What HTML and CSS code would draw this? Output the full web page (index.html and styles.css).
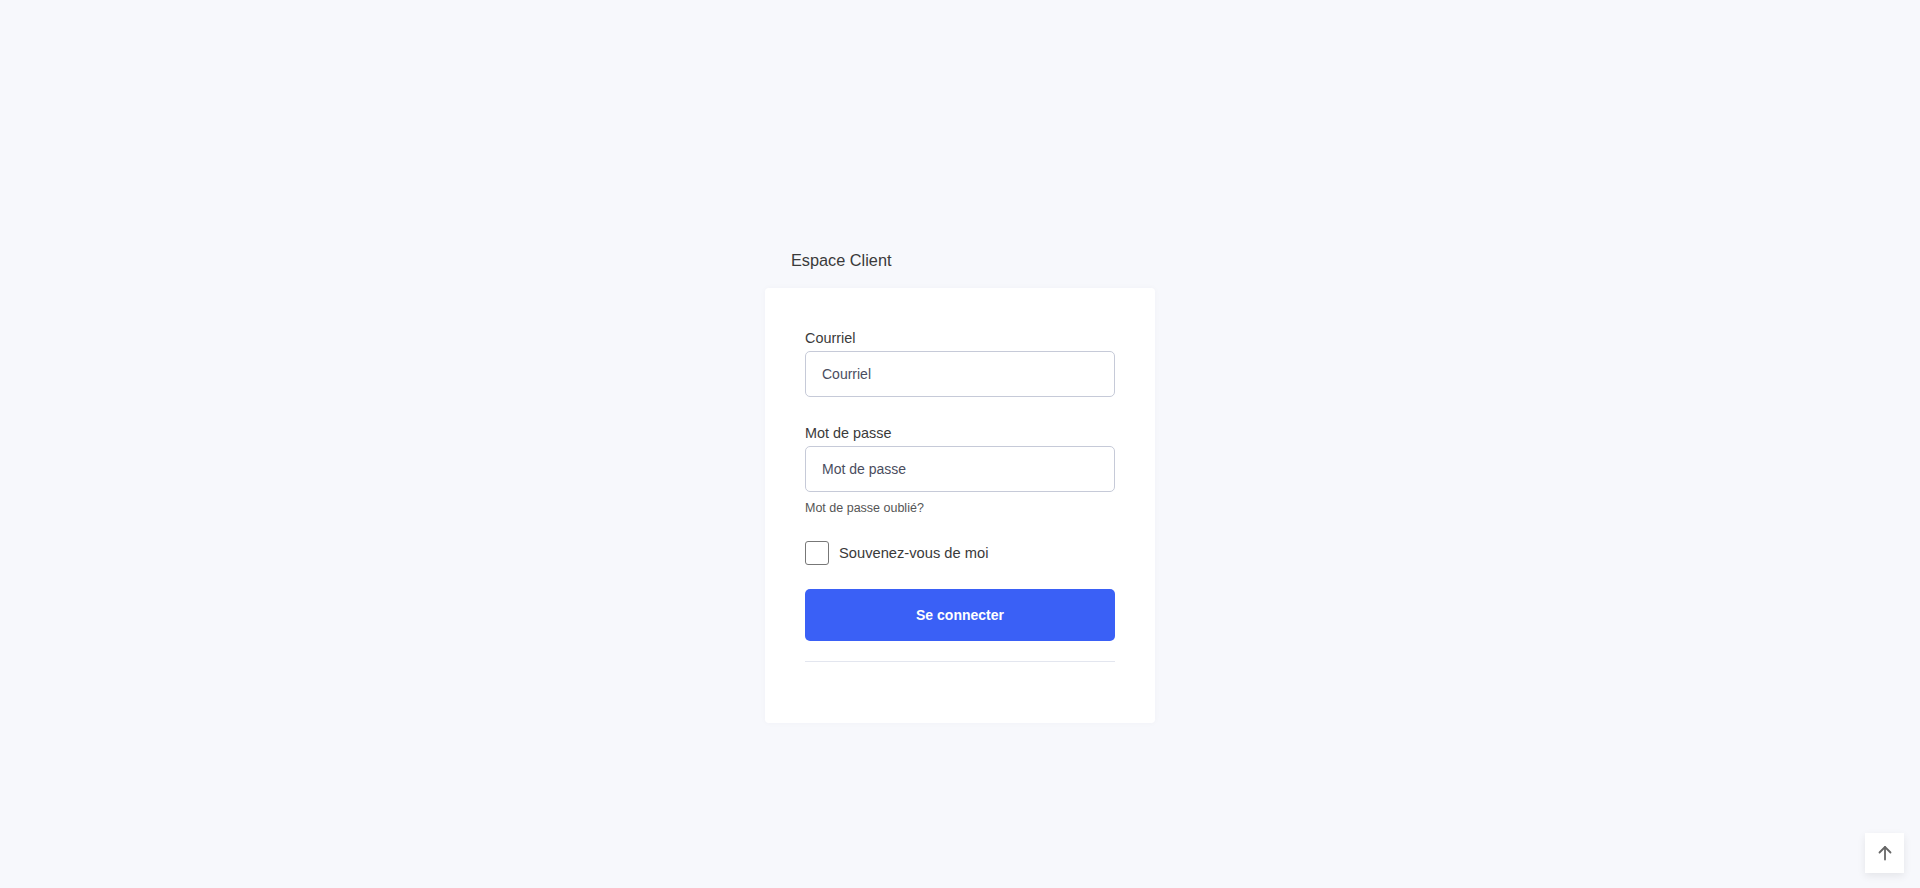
FILE: index.html
```html
<!DOCTYPE html>
<html lang="fr">
<head>
<meta charset="utf-8">
<title>Espace Client</title>
<link rel="stylesheet" href="styles.css">
</head>
<body>
<main class="page">
  <section class="login">
    <h1 class="login-title">Espace Client</h1>
    <form class="card">
      <div class="field">
        <label class="label" for="email">Courriel</label>
        <input class="input" id="email" type="email" placeholder="Courriel">
      </div>
      <div class="field">
        <label class="label" for="pwd">Mot de passe</label>
        <input class="input" id="pwd" type="password" placeholder="Mot de passe">
        <a class="forgot" href="#">Mot de passe oublié?</a>
      </div>
      <label class="remember">
        <input class="checkbox" type="checkbox">
        <span>Souvenez-vous de moi</span>
      </label>
      <button class="submit" type="button">Se connecter</button>
      <hr class="divider">
    </form>
  </section>
</main>
<a class="to-top" href="#" aria-label="Haut de page">
  <svg width="18" height="18" viewBox="0 0 18 18" fill="none" stroke="#666" stroke-width="1.8" stroke-linecap="round" stroke-linejoin="round"><path d="M9 15.5V3"/><path d="M3.5 8.5L9 3l5.5 5.5"/></svg>
</a>
</body>
</html>
```

FILE: styles.css
```css
* { box-sizing: border-box; }
html, body { margin: 0; height: 100%; }
body {
  background: #f7f8fc;
  font-family: "Liberation Sans", Arial, Helvetica, sans-serif;
  color: #333;
}
.page {
  display: flex;
  justify-content: center;
  padding-top: 248px;
}
.login { width: 390px; }
.login-title {
  margin: 0 0 16px;
  padding-left: 26px;
  font-size: 16.3px;
  font-weight: 400;
  line-height: 24px;
  color: #3a3a3a;
}
.card {
  background: #fff;
  border-radius: 4px;
  box-shadow: 0 0 6px rgba(30, 40, 80, 0.03);
  padding: 40px 40px 61px;
  display: flex;
  flex-direction: column;
}
.field { display: flex; flex-direction: column; }
.field + .field { margin-top: 26px; }
.label {
  font-size: 14.4px;
  line-height: 20px;
  color: #3a3a3a;
  margin-bottom: 3px;
}
.input {
  height: 46px;
  border: 1px solid #c6cad8;
  border-radius: 5px;
  padding: 0 16px;
  font-family: inherit;
  font-size: 14px;
  color: #333;
  background: #fff;
  outline: none;
}
.input::placeholder { color: #4a4d5e; opacity: 1; }
.forgot {
  margin-top: 8px;
  font-size: 12.5px;
  line-height: 16px;
  color: #555;
  text-decoration: none;
}
.remember {
  display: flex;
  align-items: center;
  gap: 10px;
  margin-top: 25px;
  font-size: 14.7px;
  color: #3a3a3a;
}
.checkbox {
  appearance: none;
  -webkit-appearance: none;
  margin: 0;
  width: 24px;
  height: 24px;
  border: 1px solid #777;
  border-radius: 3px;
  background: #fff;
}
.submit {
  margin-top: 24px;
  height: 52px;
  border: none;
  border-radius: 5px;
  background: #3a60f6;
  color: #fff;
  font-family: inherit;
  font-size: 14px;
  font-weight: 700;
}
.divider {
  margin: 20px 0 0;
  border: none;
  border-top: 1px solid #e3e6ef;
}
.to-top {
  position: fixed;
  right: 16px;
  bottom: 15px;
  width: 39px;
  height: 40px;
  background: #fff;
  box-shadow: 0 3px 8px rgba(0, 0, 0, 0.08);
  display: flex;
  align-items: center;
  justify-content: center;
}
```
